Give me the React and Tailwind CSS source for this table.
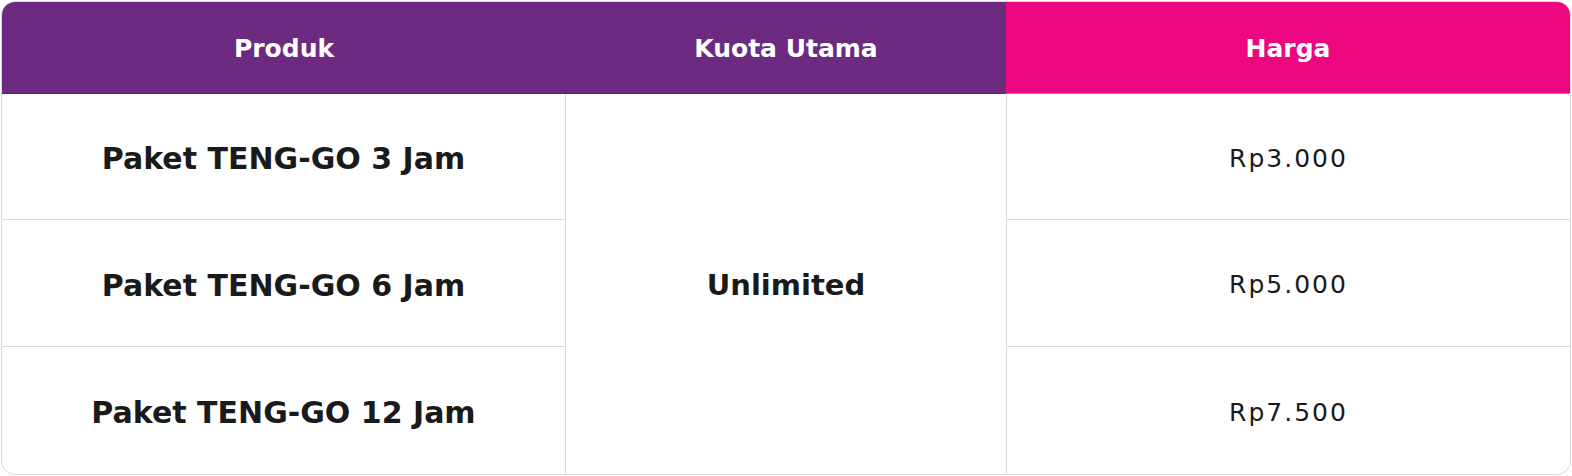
import React from "react";

const rows = [
  { name: "Paket TENG-GO 3 Jam", price: "Rp3.000" },
  { name: "Paket TENG-GO 6 Jam", price: "Rp5.000" },
  { name: "Paket TENG-GO 12 Jam", price: "Rp7.500" },
];

const App = () => {
  return (
    <div className="w-[1572px] h-[476px] bg-white p-px" style={{ fontFamily: "'DejaVu Sans', sans-serif" }}>
      <div className="h-[474px] w-[1570px] rounded-[14px] border border-[#d9d9d9] overflow-hidden grid grid-cols-[564px_440px_1fr] grid-rows-[92px_126px_127px_1fr] text-[#1a1a1a]">
        {/* Header */}
        <div className="bg-[#6c2b80] text-white font-bold text-[25px] pt-0.5 flex items-center justify-center border-b border-[#5a1f6d]">
          Produk
        </div>
        <div className="bg-[#6c2b80] text-white font-bold text-[25px] pt-0.5 flex items-center justify-center border-b border-[#5a1f6d]">
          Kuota Utama
        </div>
        <div className="bg-[#ec0680] text-white font-bold text-[25px] pt-0.5 flex items-center justify-center border-b border-[#f06aa8]">
          Harga
        </div>

        {/* Body */}
        {rows.map((row, idx) => (
          <React.Fragment key={idx}>
            <div
              className={`flex items-center justify-center font-bold text-[30px] pt-1 border-r border-[#d9d9d9] ${
                idx < 2 ? "border-b" : ""
              }`}
              style={{ gridColumn: 1, gridRow: idx + 2 }}
            >
              {row.name}
            </div>
            <div
              className={`flex items-center justify-center text-[25px] tracking-[2px] pt-1 border-l border-[#d9d9d9] ${
                idx < 2 ? "border-b" : ""
              }`}
              style={{ gridColumn: 3, gridRow: idx + 2 }}
            >
              {row.price}
            </div>
          </React.Fragment>
        ))}
        <div
          className="flex items-center justify-center font-bold text-[29px] pt-1"
          style={{ gridColumn: 2, gridRow: "2 / 5" }}
        >
          Unlimited
        </div>
      </div>
    </div>
  );
};

export default App;
